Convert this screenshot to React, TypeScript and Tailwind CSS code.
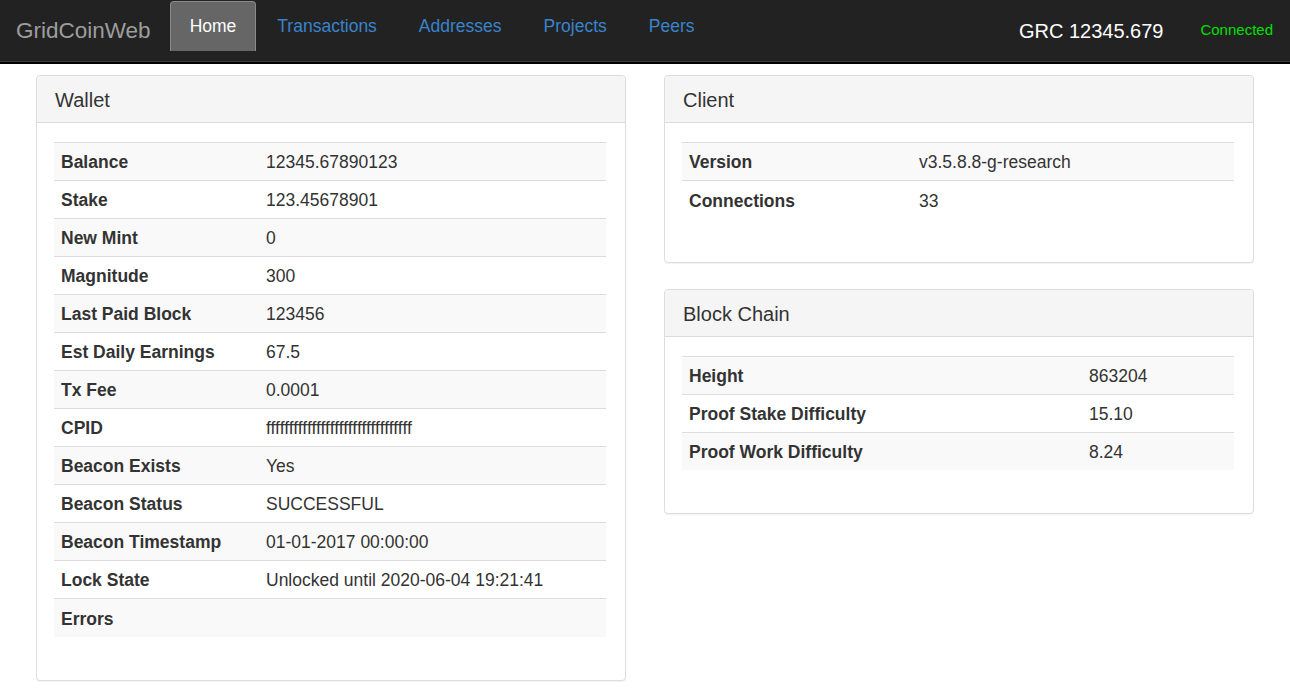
import React from "react";

type Row = [string, string];

const wallet: Row[] = [
  ["Balance", "12345.67890123"],
  ["Stake", "123.45678901"],
  ["New Mint", "0"],
  ["Magnitude", "300"],
  ["Last Paid Block", "123456"],
  ["Est Daily Earnings", "67.5"],
  ["Tx Fee", "0.0001"],
  ["CPID", "ffffffffffffffffffffffffffffffff"],
  ["Beacon Exists", "Yes"],
  ["Beacon Status", "SUCCESSFUL"],
  ["Beacon Timestamp", "01-01-2017 00:00:00"],
  ["Lock State", "Unlocked until 2020-06-04 19:21:41"],
  ["Errors", ""],
];

const client: Row[] = [
  ["Version", "v3.5.8.8-g-research"],
  ["Connections", "33"],
];

const chain: Row[] = [
  ["Height", "863204"],
  ["Proof Stake Difficulty", "15.10"],
  ["Proof Work Difficulty", "8.24"],
];

function Panel({ title, rows, labelWidth }: { title: string; rows: Row[]; labelWidth: string }) {
  return (
    <div className="rounded border border-[#ddd] bg-white shadow-[0_1px_1px_rgba(0,0,0,0.05)]">
      <div className="h-[47px] flex items-center pt-[2px] px-[18px] bg-[#f5f5f5] border-b border-[#ddd] rounded-t text-[20px] text-[#333]">
        {title}
      </div>
      <div className="pt-[19px] pb-[43px] pl-[17px] pr-[19px]">
        <table className="w-full border-collapse text-[17.5px] text-[#333]">
          <tbody>
            {rows.map(([k, v], i) => (
              <tr key={k} className={i % 2 === 0 ? "bg-[#f9f9f9]" : ""}>
                <td className={`${labelWidth} h-[38px] pt-[2px] px-[7px] border-t border-[#ddd] font-bold`}>{k}</td>
                <td className="h-[38px] pt-[2px] border-t border-[#ddd]">{v}</td>
              </tr>
            ))}
          </tbody>
        </table>
      </div>
    </div>
  );
}

export default function App() {
  const links = ["Transactions", "Addresses", "Projects", "Peers"];
  return (
    <div className="min-h-screen bg-white font-['Liberation_Sans',Arial,sans-serif]">
      {/* Navbar */}
      <nav className="h-[62px] bg-[#222] border-b border-[#3a3a3a] flex items-stretch">
        <div className="flex items-start flex-1">
          <span className="pl-[16px] pr-[19px] h-[61px] flex items-center text-[22.5px] text-[#9d9d9d]">GridCoinWeb</span>
          <a className="mt-[1px] h-[50px] px-[19px] flex items-center bg-[#666] border border-b-0 border-[#8a8a8a] rounded-t text-[17.5px] text-white">
            Home
          </a>
          {links.map((l) => (
            <a key={l} className="mt-[1px] h-[50px] px-[21px] flex items-center text-[17.5px] text-[#3a83cc]">
              {l}
            </a>
          ))}
        </div>
        <div className="flex items-center">
          <span className="text-[20px] text-white mr-[37px]">GRC 12345.679</span>
          <span className="text-[15px] text-[#00e000] mr-[17px]">Connected</span>
        </div>
      </nav>
      <div className="h-[2px] bg-black" />

      {/* Content */}
      <div className="grid grid-cols-2 gap-[38px] px-[36px] pt-[11px]">
        <div>
          <Panel title="Wallet" rows={wallet} labelWidth="w-[212px]" />
        </div>
        <div className="flex flex-col gap-[26px]">
          <Panel title="Client" rows={client} labelWidth="w-[237px]" />
          <Panel title="Block Chain" rows={chain} labelWidth="w-[407px]" />
        </div>
      </div>
    </div>
  );
}
